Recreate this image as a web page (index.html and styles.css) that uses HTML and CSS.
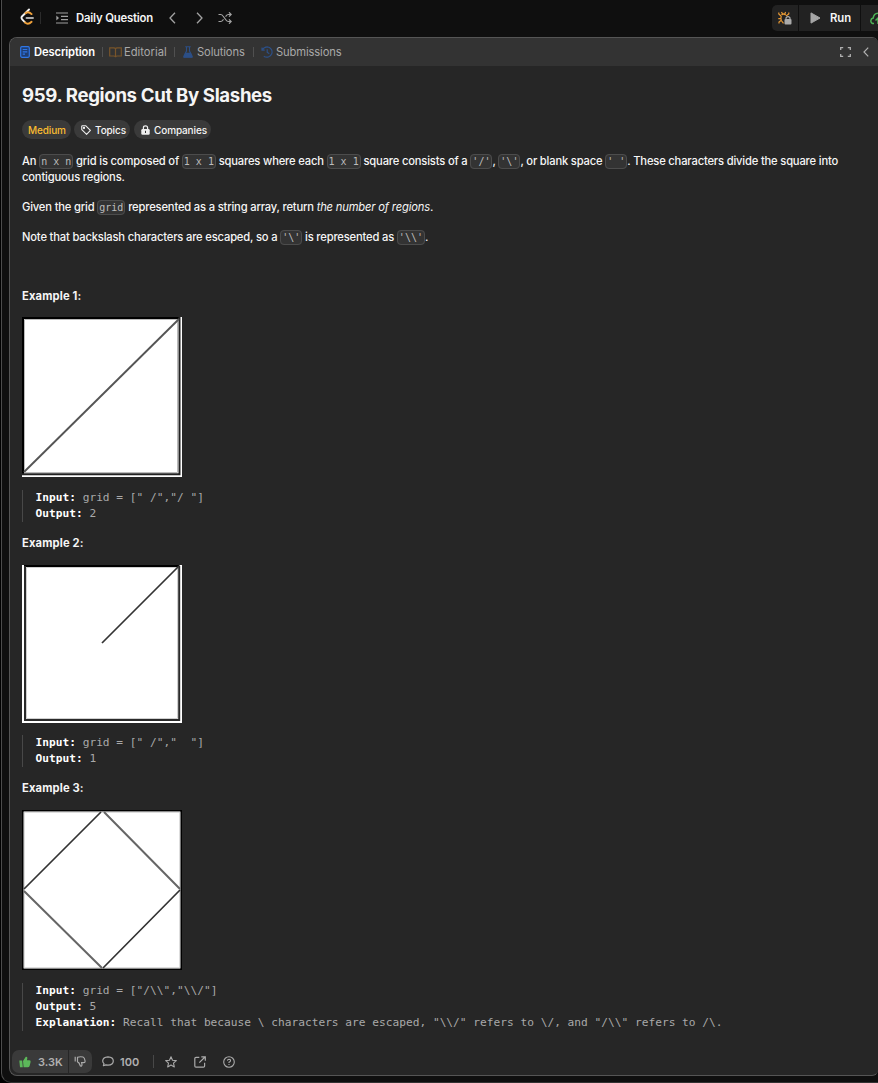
FILE: index.html
```html
<!DOCTYPE html>
<html lang="en">
<head>
<meta charset="utf-8">
<title>Regions Cut By Slashes</title>
<link rel="stylesheet" href="styles.css">
</head>
<body>
<div class="window">
  <header class="topbar">
    <svg class="logo" width="16" height="18" viewBox="0 0 16 18" fill="none" stroke-linecap="round" stroke-width="1.9"><path d="M9 1.5 2.2 8.2Q.8 9.8 2.2 11.4L5 14.4" stroke="#f2f2f2"/><path d="M5 14.4Q8 17.3 11.6 13.8M5.5 5.2Q8.5 3 11.6 6.1" stroke="#f0a13a"/><path d="M6.5 10H13" stroke="#aaa"/></svg>
    <i class="top-sep"></i>
    <svg class="list" width="12" height="12" viewBox="0 0 12 12" fill="none" stroke="#a0a0a0" stroke-width="1.2"><path d="M0 1H12M5 4.3H12M5 7.6H12M0 11H12"/><path d="M.3 3.6 3 6 .3 8.4z" fill="#a0a0a0" stroke="none"/></svg>
    <b class="daily">Daily Question</b>
    <svg class="prev" width="7" height="12" viewBox="0 0 7 12" fill="none" stroke="#a3a3a3" stroke-width="1.3"><path d="M6 .8 1 6l5 5.2"/></svg>
    <svg class="next" width="7" height="12" viewBox="0 0 7 12" fill="none" stroke="#a3a3a3" stroke-width="1.3"><path d="M1 .8 6 6 1 11.2"/></svg>
    <svg class="shuffle" width="14" height="12" viewBox="0 0 14 12" fill="none" stroke="#a3a3a3" stroke-width="1.2"><path d="M.5 2.5H2.6Q4 2.5 5 4L8 8Q9 9.5 10.4 9.5H13M.5 9.5H2.6Q4 9.5 5 8L5.5 7.3M7.6 4.6 8 4Q9 2.5 10.4 2.5H13M11 .3 13.2 2.5 11 4.7M11 7.3 13.2 9.5 11 11.7"/></svg>
    <div class="actions">
      <div class="act debug"><svg width="14" height="14" viewBox="0 0 14 14" fill="none" stroke="#e89a35" stroke-width="1.2"><path d="M3.5 4Q5.5 2 7.7 4M3.3 5Q2.5 7 3.3 9.5L5.5 12.3M.8 1.5V3L3 5M.3 7.7H3M1 12.5V11L3 9.5M10.8 1.5V3L8 5M3.5 1 4.5 3M7.6 1 6.8 3"/><rect x="6.5" y="8" width="7" height="5.5" rx="1" fill="#aaa" stroke="none"/><path d="M8 8V6.8Q10 4.6 12 6.8V8" stroke="#aaa"/></svg></div>
      <div class="act run"><svg width="11" height="12" viewBox="0 0 11 12"><path d="M1 .9 10 6 1 11.1z" fill="#a6a6a6" stroke="#a6a6a6" stroke-linejoin="round"/></svg><b>Run</b></div>
      <div class="act submit"><svg width="16" height="13" viewBox="0 0 16 13" fill="none" stroke="#4db356" stroke-width="1.5"><path d="M4 11.5Q.8 11.5.8 8.8 1 6.5 3.2 6.1 3.7 1.5 8 1.3 12 1.5 13 5M8 12V6M5.5 8.5 8 6l2.5 2.5"/></svg></div>
    </div>
  </header>
  <main class="panel">
    <nav class="tabs">
      <svg class="t1" width="10" height="12" viewBox="0 0 10 12" fill="#1f3d70" stroke="#2f77e6" stroke-width="1.2"><rect x=".7" y=".7" width="8.6" height="10.6" rx="1.2"/><path d="M2.7 3.5H7.3M2.7 5.8H7.3M2.7 8.1H5"/></svg>
      <span class="tab on">Description</span><i class="sep s1"></i>
      <svg class="t2" width="13" height="11" viewBox="0 0 13 11" fill="none" stroke="#79552a" stroke-width="1.2"><path d="M6.5 1.7Q6 .8 4.8.8H.7V9H5Q6.2 9 6.5 10.2 6.8 9 8 9H12.3V.8H8.2Q7 .8 6.5 1.7V10"/></svg>
      <span class="tab ed">Editorial</span><i class="sep s2"></i>
      <svg class="t3" width="10" height="12" viewBox="0 0 10 12" fill="none" stroke="#2c4f86" stroke-width="1.1"><path d="M2.3.7H7.7M3.5 1V5L1 10Q.6 11.3 1.8 11.3H8.2Q9.4 11.3 9 10L6.5 5V1"/><path d="M2.5 7.4H7.5L9 11H1z" fill="#2c4f86"/></svg>
      <span class="tab so">Solutions</span><i class="sep s3"></i>
      <svg class="t4" width="12" height="12" viewBox="0 0 12 12" fill="none" stroke="#2c4f86" stroke-width="1.2"><path d="M1 1.5V4.2H3.7M1.2 4Q3 .8 6.2.8A5.2 5.2 0 1 1 2.8 10.2M6.2 3.3V6.3L8.3 7.8"/></svg>
      <span class="tab su">Submissions</span>
      <svg class="full" width="11" height="10" viewBox="0 0 11 10" fill="none" stroke="#b0b0b0" stroke-width="1.3"><path d="M.7 3V.7H3.2M7.8.7H10.3V3M10.3 7V9.3H7.8M3.2 9.3H.7V7"/></svg>
      <svg class="fold" width="6" height="10" viewBox="0 0 6 10" fill="none" stroke="#b0b0b0" stroke-width="1.2"><path d="M5.2.7 1 5l4.2 4.3"/></svg>
    </nav>
    <article class="content">
      <h1><span>959. Regions Cut By Slashes</span></h1>
      <div class="chips">
        <span class="chip medium">Medium</span>
        <span class="chip topics"><svg width="10" height="10" viewBox="0 0 10 10" fill="none" stroke="#eee" stroke-width="1.1" stroke-linejoin="round"><path d="M.7 1.5Q.7.7 1.5.7H4.6L9.4 5.3 5.6 9.3.8 4.7z"/><circle cx="3" cy="3" r=".6"/></svg>Topics</span>
        <span class="chip companies"><svg width="9" height="10" viewBox="0 0 9 10"><rect x=".3" y="4" width="8.4" height="5.7" rx="1.2" fill="#eee"/><path d="M2.4 4V2.8Q2.4.8 4.5.8T6.6 2.8V4" fill="none" stroke="#eee" stroke-width="1.2"/><path d="M4.5 5.8V8" stroke="#333"/></svg>Companies</span>
      </div>
      <p class="p1">An <code>n x n</code> grid is composed of <code>1 x 1</code> squares where each <code>1 x 1</code> square consists of a <code>'/'</code>, <code>'\'</code>, or blank space <code>' '</code>. These characters divide the square into<br>contiguous regions.</p>
      <p class="p2">Given the grid <code>grid</code> represented as a string array, return <em>the number of regions</em>.</p>
      <p class="p3">Note that backslash characters are escaped, so a <code>'\'</code> is represented as <code>'\\'</code>.</p>
      <p class="blank">&nbsp;</p>
      <p class="ex"><strong>Example 1:</strong></p>
      <svg class="fig" width="160" height="160" viewBox="0 0 160 160" fill="none"><path d="M0 0H160V160H0z" fill="#fff"/><path d="M2.5 155V2.5H155.5V155.5H2.5" stroke="#bbb"/><path d="M1 157V1H157.5" stroke="#000" stroke-width="2"/><path d="M157.5 0V157.2H0" stroke="#222" stroke-width="2"/><path d="M2 155 157 2" stroke="#555" stroke-width="1.9"/></svg>
      <pre class="first"><b>Input:</b> grid = [" /","/ "]
<b>Output:</b> 2</pre>
      <p class="ex loose"><strong>Example 2:</strong></p>
      <svg class="fig" width="160" height="158" viewBox="0 0 160 158" fill="none"><path d="M0 0H160V158H0z" fill="#fff"/><path d="M4.5 2.5H155.5V153.5H4.5z" stroke="#bbb" stroke-width=".7"/><path d="M2 1H157.5" stroke="#000" stroke-width="2"/><path d="M3 1V155H157.2V1" stroke="#2a2a2a" stroke-width="2"/><path d="M80 78 157 1" stroke="#333" stroke-width="1.7"/></svg>
      <pre class="short"><b>Input:</b> grid = [" /","  "]
<b>Output:</b> 1</pre>
      <p class="ex loose"><strong>Example 3:</strong></p>
      <svg class="fig" width="160" height="160" viewBox="0 0 160 160" fill="none"><path d="M.8.8H159.2V159.2H.8z" fill="#fff" stroke="#000" stroke-width="1.6"/><path d="M2.2 2.2H157.8V157.8H2.2z" stroke="#bbb" stroke-width=".7"/><path d="M2 79 79 2M81 158 158 80" stroke="#333" stroke-width="1.7"/><path d="M82 2 158 79M2 81 80 158" stroke="#666" stroke-width="2"/></svg>
      <pre><b>Input:</b> grid = ["/\\","\\/"]
<b>Output:</b> 5
<b>Explanation:</b> Recall that because \ characters are escaped, "\\/" refers to \/, and "/\\" refers to /\.</pre>
    </article>
    <footer class="foot">
      <div class="vote up"><svg width="12" height="12" viewBox="0 0 12 12" fill="#5cb85a"><path d="M.3 4.5H3.2L3.8 11.3H1z"/><path d="M4 5 6.8.8Q8.7.5 8.3 2.6L7.9 4.2H10.5Q12 4.4 11.6 6L10.6 10Q10.2 11.3 8.8 11.3H4.6z"/></svg><b>3.3K</b></div>
      <div class="vote down"><svg width="12" height="11" viewBox="0 0 12 11" fill="none" stroke="#aaa" stroke-width="1.2"><path d="M1.2.8V5.5M3.5 6V1.2Q6 .4 9 1 10.6 1.6 11.1 5 11.2 6.6 9.8 6.7H7.6L8 8.7Q7.8 10.5 6.4 10L5 7 3.5 6"/></svg></div>
      <svg class="talk" width="12" height="11" viewBox="0 0 12 11" fill="none" stroke="#aaa" stroke-width="1.2"><path d="M1.4 9.7 2 7.6Q.7 6.3.7 4.9.9 1 6 .8 11.2 1 11.3 4.9 11.2 8.8 6 9.2L3.8 8.9z" stroke-linejoin="round"/></svg>
      <b class="count">100</b><i class="foot-sep"></i>
      <svg class="star" width="12" height="12" viewBox="0 0 12 12" fill="none" stroke="#aaa" stroke-width="1.1" stroke-linejoin="round"><path d="M6 .8 7.5 4.2 11.3 4.6 8.5 7.1 9.3 10.9 6 9 2.7 10.9 3.5 7.1.7 4.6 4.5 4.2z"/></svg>
      <svg class="share" width="12" height="12" viewBox="0 0 12 12" fill="none" stroke="#aaa" stroke-width="1.2"><path d="M5.3 1.4H2Q.8 1.4.8 2.6V10Q.8 11.2 2 11.2H9.4Q10.6 11.2 10.6 10V6.8M7.3.8H11.3V4.8M11 1 5.3 6.7"/></svg>
      <svg class="help" width="12" height="12" viewBox="0 0 12 12" fill="none" stroke="#aaa" stroke-width="1.1"><circle cx="6" cy="6" r="5.3"/><path d="M4.4 4.7Q4.6 3.3 6 3.3 7.7 3.4 7.5 4.8 7.3 5.5 6 6.2V7.1M6 8V9.1"/></svg>
    </footer>
  </main>
</div>
</body>
</html>
```
FILE: styles.css
```css
* { box-sizing: border-box; }
body { margin: 0; background: #000; font-family: Inter, "Liberation Sans", sans-serif; color: #f5f5f5; overflow: hidden; }
svg { display: block; flex: none; }
i { flex: none; }
.window { height: 1083px; margin-left: 1px; width: 877px; border-left: 1px solid #4c4c4c; border-bottom: 1px solid #333; border-bottom-left-radius: 10px; background: #0f0f0f; padding-left: 7px; }
.topbar { height: 37px; display: flex; align-items: center; padding-left: 11px; padding-bottom: 1px; }
.logo { margin-top: -2px; }
.top-sep { width: 1px; height: 12px; background: #2b2b2b; margin-left: 4px; }
.list { margin-left: 15px; }
.daily { font-size: 11.3px; font-weight: 600; letter-spacing: -.17px; margin-left: 8px; width: 77px; white-space: nowrap; }
.prev { margin-left: 16px; }
.next { margin-left: 20px; }
.shuffle { margin-left: 15px; }
.actions { display: flex; gap: 1px; margin-left: auto; height: 26px; }
.act { background: #222; display: flex; align-items: center; }
.debug { width: 26px; border-radius: 5px 0 0 5px; padding-left: 6px; }
.run { width: 61px; padding-left: 11px; gap: 9px; font-size: 11.3px; }
.run b { font-weight: 600; }
.submit { width: 17px; padding-left: 9px; overflow: hidden; }
.panel { height: 1039px; border: 1px solid #555; border-right: 0; border-radius: 8px 6px 6px 8px; background: #262626; overflow: hidden; display: flex; flex-direction: column; }
.tabs { height: 28px; background: #333; display: flex; align-items: center; flex: none; padding-left: 10px; font-size: 11.2px; letter-spacing: -.12px; color: #a9a9a9; }
.tab { white-space: nowrap; }
.on { font-weight: 600; color: #fff; margin-left: 4px; width: 61px; }
.sep { width: 1px; height: 10px; background: #505050; }
.s1 { margin-left: 7px; }
.t2 { margin-left: 6px; }
.ed { margin-left: 2px; width: 43px; letter-spacing: 0; }
.s2 { margin-left: 7px; }
.t3 { margin-left: 8px; }
.so { margin-left: 4px; width: 48px; }
.s3 { margin-left: 8px; }
.t4 { margin-left: 7px; }
.su { margin-left: 3px; }
.full { margin-left: auto; }
.fold { margin: 0 9px 0 12px; }
.content { padding: 17px 12px 0; font-size: 11.2px; line-height: 16px; letter-spacing: -.175px; flex: 1; }
h1 { margin: 0; font-size: 18.6px; line-height: 24px; font-weight: 700; letter-spacing: -.34px; white-space: nowrap; }
.chips { display: flex; margin-top: 13px; height: 19px; font-size: 10px; letter-spacing: -.12px; }
.chip { display: flex; align-items: center; background: #3a3a3a; border-radius: 10px; height: 19px; padding-left: 7px; white-space: nowrap; font-weight: 450; }
.medium { width: 49px; color: #fbbc30; padding-left: 6px; }
.topics { width: 56px; margin-left: 3px; gap: 4px; }
.companies { width: 77px; margin-left: 4px; gap: 4px; }
p { margin: 0 0 14px; white-space: nowrap; font-weight: 450; }
.p1 { margin-top: 14px; }
.blank { margin-bottom: 13px; }
code { font: 10px/12px "DejaVu Sans Mono", monospace; letter-spacing: 0; color: #bcbcbc; background: #333; border: 1px solid #4c4c4c; border-radius: 4px; padding: 1px; }
strong { font-weight: 700; letter-spacing: .14px; }
.ex { margin-bottom: 13px; }
.loose { margin-bottom: 14px; }
pre { margin: 13px 0 13px; border-left: 1px solid #484848; padding-left: 12.5px; font: 11.2px/16px "DejaVu Sans Mono", monospace; letter-spacing: 0; color: #a9a9a9; }
pre.short { margin-top: 12px; }
pre b { color: #fff; }
.foot { height: 28px; display: flex; align-items: center; flex: none; padding-left: 2px; padding-top: 1px; font-size: 11px; color: #b0b0b0; }
.foot b { font-weight: 600; }
.vote { height: 23px; background: #3a3a3a; display: flex; align-items: center; }
.up { width: 56px; border-radius: 7px 0 0 7px; padding-left: 7px; gap: 7px; }
.down { width: 23px; border-radius: 0 7px 7px 0; padding-left: 5px; margin-left: 1px; }
.talk { margin-left: 10px; }
.count { margin-left: 6px; width: 20px; }
.foot-sep { width: 1px; height: 13px; background: #484848; margin-left: 13px; }
.star { margin-left: 11px; }
.share, .help { margin-left: 17px; }
```
